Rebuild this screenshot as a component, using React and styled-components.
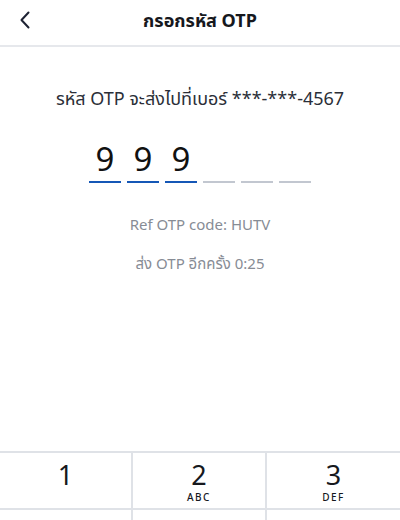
import styled, { createGlobalStyle } from 'styled-components';

const GlobalStyle = createGlobalStyle`
   html, body {
      margin: 0;
      padding: 0;
      background: #fff;
   }
   body {
      font-family: "Noto Sans", "Noto Sans Thai", "DejaVu Sans", sans-serif;
      color: #1a1c22;
   }
`;

const keys = [
   { n: '1', l: '' },
   { n: '2', l: 'ABC' },
   { n: '3', l: 'DEF' },
   { n: '4', l: 'GHI' },
   { n: '5', l: 'JKL' },
   { n: '6', l: 'MNO' },
   { n: '7', l: 'PQRS' },
   { n: '8', l: 'TUV' },
   { n: '9', l: 'WXYZ' },
];

const code = ['9', '9', '9', '', '', ''];

const App = () => {
   return (
      <Page>
         <GlobalStyle />
         <Header>
            <BackButton aria-label="back">
               <svg width="12" height="18" viewBox="0 0 12 18" fill="none">
                  <path d="M9.5 1.5L2.5 9l7 7.5" stroke="#1d2233" strokeWidth="2" strokeLinecap="round" strokeLinejoin="round" />
               </svg>
            </BackButton>
            <Title>กรอกรหัส OTP</Title>
         </Header>
         <Content>
            <Subtitle>รหัส OTP จะส่งไปที่เบอร์ ***-***-4567</Subtitle>
            <CodeRow>
               {code.map((d, i) => (
                  <Slot key={i} filled={d !== ''}>
                     {d}
                  </Slot>
               ))}
            </CodeRow>
            <Note>Ref OTP code: HUTV</Note>
            <Note>ส่ง OTP อีกครั้ง 0:25</Note>
         </Content>
         <Keypad>
            {keys.map(({ n, l }) => (
               <Key key={n}>
                  <KeyNum>{n}</KeyNum>
                  <KeyLetters>{l}</KeyLetters>
               </Key>
            ))}
         </Keypad>
      </Page>
   );
};

const Page = styled.div`
   width: 400px;
   height: 520px;
   overflow: hidden;
   display: flex;
   flex-direction: column;
`;

const Header = styled.header`
   position: relative;
   height: 45px;
   flex: none;
   display: flex;
   align-items: center;
   justify-content: center;
   border-bottom: 2px solid #e6e8ec;
`;

const BackButton = styled.button`
   position: absolute;
   left: 19px;
   top: 11px;
   border: none;
   background: transparent;
   padding: 0;
   cursor: pointer;
`;

const Title = styled.h1`
   margin: 0 0 2px;
   font-size: 18px;
   font-weight: 700;
   color: #16181d;
`;

const Content = styled.main`
   height: 404px;
   flex: none;
   display: flex;
   flex-direction: column;
   align-items: center;
   padding-top: 39px;
   box-sizing: border-box;
`;

const Subtitle = styled.p`
   margin: 0;
   font-size: 18px;
   color: #2b2f38;
`;

const CodeRow = styled.div`
   display: flex;
   gap: 6px;
   margin-top: 26px;
`;

const Slot = styled.div`
   width: 32px;
   height: 40px;
   display: flex;
   align-items: flex-end;
   justify-content: center;
   padding-bottom: 2px;
   font-size: 33px;
   line-height: 40px;
   color: #111;
   border-bottom: 2px solid ${({ filled }) => (filled ? '#1557b6' : '#c2c7d0')};
`;

const Note = styled.p`
   margin: 31px 0 0;
   font-size: 15px;
   color: #878c95;
   & + & {
      margin-top: 19px;
   }
`;

const Keypad = styled.div`
   display: grid;
   grid-template-columns: 133px 134px 133px;
   border-top: 2px solid #dfe2e7;
   flex: none;
`;

const Key = styled.div`
   height: 57px;
   display: flex;
   flex-direction: column;
   align-items: center;
   padding-top: 8px;
   box-sizing: border-box;
   border-bottom: 2px solid #dfe2e7;
   border-right: 2px solid #dfe2e7;
   &:nth-child(3n) {
      border-right: none;
   }
`;

const KeyNum = styled.span`
   font-size: 27px;
   line-height: 27px;
   color: #16181d;
`;

const KeyLetters = styled.span`
   margin-top: 3px;
   font-size: 10px;
   line-height: 12px;
   letter-spacing: 1.5px;
   color: #16181d;
   font-weight: 500;
`;

export default App;
